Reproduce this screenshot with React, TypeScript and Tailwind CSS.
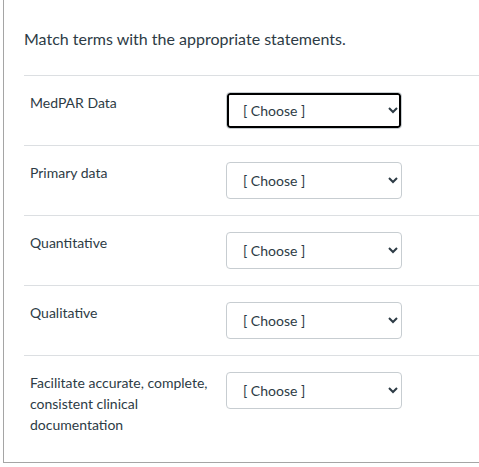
import React from 'react';

const rows: { label: string; focused?: boolean }[] = [
  { label: 'MedPAR Data', focused: true },
  { label: 'Primary data' },
  { label: 'Quantitative' },
  { label: 'Qualitative' },
  { label: 'Facilitate accurate, complete, consistent clinical documentation' },
];

export default function App() {
  return (
    <div className="h-[467px] w-[479px] overflow-hidden bg-white font-['Lato',sans-serif] text-[#2d3b45]">
      <div className="ml-[3px] w-[520px] border-b border-l border-[#a5a5a5] pl-[20px] pb-[27px]">
        <p className="pt-[27px] pb-[24px] text-[16px] leading-[24px]">Match terms with the appropriate statements.</p>
        {rows.map((row, i) => (
          <div key={i} className="flex border-t border-[#dcdfe2] pt-[16px] pb-[16px] pl-[6px] last:pb-0">
            <div className="w-[196px] text-[14px] leading-[21px]">{row.label}</div>
            <select
              defaultValue=""
              className={`h-[37px] w-[176px] rounded-[4px] border border-[#c7cdd1] bg-white pl-[12px] text-[14px] text-[#2d3b45] ${
                row.focused ? 'shadow-[inset_0_0_0_2px_#000]' : ''
              }`}
            >
              <option value="">[ Choose ]</option>
            </select>
          </div>
        ))}
      </div>
    </div>
  );
}
